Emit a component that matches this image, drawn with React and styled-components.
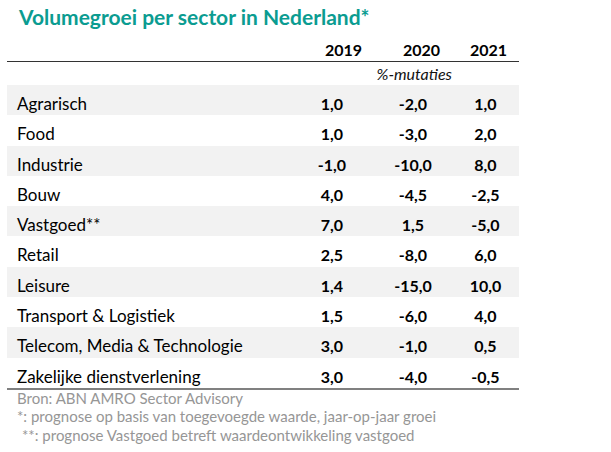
import React from 'react'
import styled, { createGlobalStyle } from 'styled-components'

const rows = [
  ['Agrarisch', '1,0', '-2,0', '1,0'],
  ['Food', '1,0', '-3,0', '2,0'],
  ['Industrie', '-1,0', '-10,0', '8,0'],
  ['Bouw', '4,0', '-4,5', '-2,5'],
  ['Vastgoed**', '7,0', '1,5', '-5,0'],
  ['Retail', '2,5', '-8,0', '6,0'],
  ['Leisure', '1,4', '-15,0', '10,0'],
  ['Transport & Logistiek', '1,5', '-6,0', '4,0'],
  ['Telecom, Media & Technologie', '3,0', '-1,0', '0,5'],
  ['Zakelijke dienstverlening', '3,0', '-4,0', '-0,5']
]

export default function App() {
  return (
    <>
      <GlobalStyle />
      <Page>
        <Title>Volumegroei per sector in Nederland*</Title>

        <HeaderRow>
          <span />
          <Year>2019</Year>
          <Year>2020</Year>
          <Year>2021</Year>
        </HeaderRow>

        <UnitRow>
          <span />
          <span />
          <Unit>%-mutaties</Unit>
          <span />
        </UnitRow>

        <Body>
          {rows.map(([label, ...values], i) => (
            <Row key={label} shaded={i % 2 === 0}>
              <Label>{label}</Label>
              {values.map((v, j) => (
                <Value key={j}>{v}</Value>
              ))}
            </Row>
          ))}
        </Body>

        <Notes>
          <Note>Bron: ABN AMRO Sector Advisory</Note>
          <Note>*: prognose op basis van toegevoegde waarde, jaar-op-jaar groei</Note>
          <Note indent>**: prognose Vastgoed betreft waardeontwikkeling vastgoed</Note>
        </Notes>
      </Page>
    </>
  )
}

const GlobalStyle = createGlobalStyle`
  body {
    margin: 0;
    background: #ffffff;
    font-family: Lato, "Liberation Sans", sans-serif;
  }
`

const columns = '283px 84px 78px 67px'

const Page = styled.div`
  width: 512px;
  padding-left: 7px;
`

const Title = styled.h1`
  margin: 0;
  padding: 3px 0 0 12px;
  font-size: 21px;
  line-height: 28px;
  font-weight: 700;
  color: #0b9c91;
`

const HeaderRow = styled.div`
  display: grid;
  grid-template-columns: ${columns};
  padding: 9px 0 1px;
  line-height: 20px;
  border-bottom: 1.5px solid #333333;
`

const Year = styled.span`
  text-align: right;
  padding-right: 12px;
  font-size: 16px;
  font-weight: 700;
  color: #000000;
`

const UnitRow = styled.div`
  display: grid;
  grid-template-columns: ${columns};
  box-sizing: border-box;
  height: 23px;
  padding-top: 2px;
  line-height: 20px;
`

const Unit = styled.span`
  text-align: right;
  font-size: 16px;
  font-style: italic;
  color: #111111;
  white-space: nowrap;
`

const Body = styled.div`
  border-bottom: 2px solid #808080;
`

const Row = styled.div`
  display: grid;
  grid-template-columns: ${columns};
  box-sizing: border-box;
  height: 30.3px;
  padding-top: 9px;
  line-height: 20px;
  font-size: 17px;
  background: ${props => (props.shaded ? '#f2f2f2' : '#ffffff')};
`

const Label = styled.span`
  padding-left: 10px;
  color: #000000;
  white-space: nowrap;
`

const Value = styled.span`
  text-align: center;
  font-size: 16px;
  font-weight: 700;
  color: #000000;
`

const Notes = styled.div`
  padding-left: 10px;
  margin-top: -1px;
`

const Note = styled.div`
  font-size: 15px;
  line-height: 18.5px;
  color: #969696;
  padding-left: ${props => (props.indent ? '5px' : '0')};
  white-space: nowrap;
`
